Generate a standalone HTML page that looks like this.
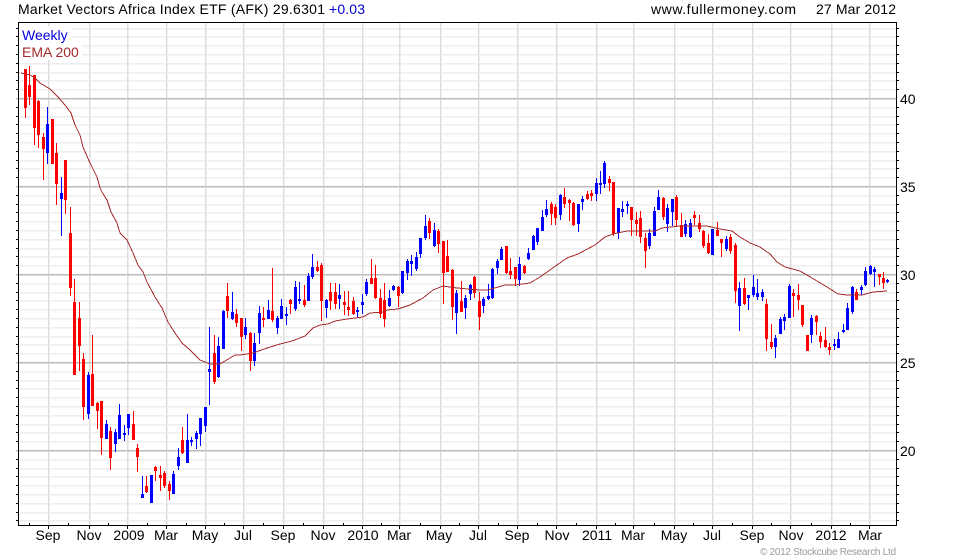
<!DOCTYPE html>
<html><head><meta charset="utf-8"><title>AFK chart</title>
<style>html,body{margin:0;padding:0;background:#fff;width:980px;height:560px;overflow:hidden}svg{display:block}text{font-family:"Liberation Sans",Arial,sans-serif}</style></head>
<body>
<svg xmlns="http://www.w3.org/2000/svg" width="980" height="560" viewBox="0 0 980 560">
<rect width="980" height="560" fill="#fff"/>
<g shape-rendering="crispEdges" clip-path="url(#plot)">
<clipPath id="plot"><rect x="16" y="23" width="880" height="502"/></clipPath>
<defs>
<path id="hm" fill="none" d="M19 28.5H896M19 36.5H896M19 45.5H896M19 54.5H896M19 63.5H896M19 72.5H896M19 80.5H896M19 89.5H896M19 107.5H896M19 116.5H896M19 124.5H896M19 133.5H896M19 142.5H896M19 151.5H896M19 160.5H896M19 168.5H896M19 177.5H896M19 195.5H896M19 204.5H896M19 212.5H896M19 221.5H896M19 230.5H896M19 239.5H896M19 248.5H896M19 256.5H896M19 265.5H896M19 283.5H896M19 292.5H896M19 300.5H896M19 309.5H896M19 318.5H896M19 327.5H896M19 336.5H896M19 344.5H896M19 353.5H896M19 371.5H896M19 380.5H896M19 388.5H896M19 397.5H896M19 406.5H896M19 415.5H896M19 424.5H896M19 432.5H896M19 441.5H896M19 459.5H896M19 468.5H896M19 476.5H896M19 485.5H896M19 494.5H896M19 503.5H896M19 512.5H896M19 520.5H896"/>
<path id="vg" fill="none" d="M48.5 23V525M89.5 23V525M127.5 23V525M166.5 23V525M205.5 23V525M243.5 23V525M283.5 23V525M323.5 23V525M362.5 23V525M399.5 23V525M440.5 23V525M478.5 23V525M517.5 23V525M556.5 23V525M596.5 23V525M633.5 23V525M674.5 23V525M712.5 23V525M752.5 23V525M790.5 23V525M831.5 23V525M869.5 23V525"/>
<path id="hj" fill="none" d="M16 98.5H896M16 186.5H896M16 274.5H896M16 362.5H896M16 450.5H896"/>
</defs>
<use href="#hm" stroke="#f6f6f6" transform="translate(0,1)"/>
<use href="#hm" stroke="#eee"/>
<use href="#vg" stroke="#eee" transform="translate(1,0)"/>
<use href="#vg" stroke="#ddd"/>
<use href="#hj" stroke="#ddd" transform="translate(0,1)"/>
<use href="#hj" stroke="#bbb"/>
<rect x="19" y="26" width="52" height="18" fill="#fff"/>
<rect x="19" y="44" width="63" height="16" fill="#fff"/>
</g>
<g shape-rendering="crispEdges">
<path fill="#f00" d="M25 69h1V118h-1zM24 69h3V108h-3zM29 66h1V105h-1zM28 85h3V97h-3zM34 75h1V145h-1zM33 75h3V128h-3zM38 100h1V148h-1zM37 101h3V135h-3zM43 133h1V180h-1zM42 137h3V149h-3zM51 119h3V164h-3zM56 143h1V205h-1zM55 153h3V184h-3zM65 160h1V214h-1zM64 160h3V200h-3zM70 207h1V296h-1zM69 233h3V288h-3zM74 279h1V375h-1zM73 302h3V375h-3zM79 302h1V371h-1zM78 318h3V346h-3zM83 353h1V420h-1zM82 359h3V407h-3zM92 335h1V406h-1zM91 374h3V406h-3zM97 402h1V429h-1zM96 403h3V411h-3zM101 401h1V455h-1zM100 401h3V438h-3zM110 427h1V470h-1zM109 431h3V458h-3zM133 411h1V440h-1zM132 424h3V440h-3zM137 444h1V472h-1zM136 448h3V457h-3zM146 476h1V493h-1zM145 486h3V492h-3zM155 466h1V481h-1zM154 467h3V471h-3zM160 466h1V491h-1zM159 475h3V478h-3zM164 471h1V488h-1zM163 473h3V486h-3zM169 481h1V500h-1zM168 484h3V491h-3zM182 427h1V454h-1zM181 440h3V453h-3zM214 335h1V384h-1zM213 353h3V382h-3zM227 283h1V318h-1zM226 296h3V311h-3zM236 309h1V327h-1zM235 314h3V323h-3zM241 318h1V351h-1zM240 318h3V337h-3zM250 332h1V371h-1zM249 333h3V361h-3zM263 307h1V327h-1zM262 318h3V320h-3zM272 268h1V322h-1zM271 311h3V320h-3zM290 299h1V314h-1zM289 300h3V304h-3zM304 285h1V307h-1zM303 300h3V305h-3zM317 261h1V272h-1zM316 267h3V271h-3zM321 263h1V321h-1zM320 265h3V301h-3zM330 283h1V310h-1zM329 292h3V301h-3zM335 283h1V309h-1zM334 292h3V304h-3zM344 291h1V315h-1zM343 302h3V305h-3zM348 291h1V316h-1zM347 307h3V310h-3zM353 297h1V315h-1zM352 301h3V314h-3zM371 259h1V284h-1zM370 278h3V284h-3zM375 265h1V299h-1zM374 278h3V298h-3zM380 289h1V318h-1zM379 298h3V314h-3zM384 283h1V327h-1zM383 300h3V319h-3zM398 286h1V307h-1zM397 287h3V296h-3zM429 218h1V239h-1zM428 221h3V233h-3zM438 229h1V253h-1zM437 231h3V244h-3zM443 241h1V304h-1zM442 241h3V273h-3zM447 240h1V272h-1zM446 256h3V272h-3zM452 269h1V320h-1zM451 270h3V307h-3zM461 281h1V312h-1zM460 301h3V312h-3zM474 276h1V298h-1zM473 277h3V293h-3zM479 292h1V330h-1zM478 301h3V317h-3zM506 246h1V274h-1zM505 246h3V273h-3zM510 258h1V279h-1zM509 271h3V275h-3zM515 267h1V286h-1zM514 267h3V279h-3zM524 265h1V274h-1zM523 266h3V273h-3zM551 202h1V225h-1zM550 204h3V214h-3zM555 204h1V225h-1zM554 207h3V218h-3zM564 188h1V208h-1zM563 197h3V204h-3zM569 199h1V221h-1zM568 200h3V203h-3zM573 202h1V226h-1zM572 203h3V225h-3zM587 191h1V200h-1zM586 194h3V199h-3zM591 190h1V201h-1zM590 193h3V196h-3zM609 176h1V191h-1zM608 179h3V183h-3zM613 182h1V236h-1zM612 182h3V234h-3zM631 207h1V236h-1zM630 207h3V220h-3zM636 212h1V236h-1zM635 220h3V224h-3zM640 211h1V243h-1zM639 218h3V237h-3zM645 233h1V268h-1zM644 238h3V251h-3zM663 197h1V220h-1zM662 198h3V217h-3zM676 195h1V226h-1zM675 197h3V220h-3zM681 213h1V237h-1zM680 225h3V237h-3zM694 211h1V225h-1zM693 215h3V218h-3zM699 215h1V232h-1zM698 223h3V229h-3zM703 230h1V248h-1zM702 231h3V246h-3zM708 234h1V254h-1zM707 243h3V253h-3zM717 222h1V236h-1zM716 230h3V236h-3zM721 239h1V257h-1zM720 239h3V243h-3zM730 234h1V254h-1zM729 237h3V251h-3zM735 243h1V303h-1zM734 245h3V291h-3zM744 278h1V305h-1zM743 288h3V304h-3zM766 299h1V351h-1zM765 304h3V339h-3zM771 324h1V349h-1zM770 342h3V347h-3zM793 289h1V317h-1zM792 293h3V296h-3zM798 284h1V310h-1zM797 295h3V300h-3zM802 305h1V327h-1zM801 305h3V325h-3zM806 335h3V351h-3zM816 315h1V335h-1zM815 316h3V322h-3zM820 332h1V348h-1zM819 336h3V342h-3zM825 327h1V348h-1zM824 340h3V347h-3zM829 343h1V355h-1zM828 347h3V350h-3zM856 289h1V300h-1zM855 292h3V300h-3zM879 274h1V285h-1zM878 274h3V277h-3zM883 272h1V289h-1zM882 278h3V283h-3z"/>
<path fill="#00f" d="M47 107h1V164h-1zM46 124h3V153h-3zM61 177h1V236h-1zM60 193h3V199h-3zM88 372h1V419h-1zM87 375h3V414h-3zM106 420h1V439h-1zM105 424h3V439h-3zM115 429h1V452h-1zM114 432h3V444h-3zM119 404h1V439h-1zM118 415h3V439h-3zM124 425h1V441h-1zM123 433h3V435h-3zM128 414h1V435h-1zM127 414h3V428h-3zM142 476h1V498h-1zM141 494h3V498h-3zM150 475h3V503h-3zM173 471h1V494h-1zM172 474h3V494h-3zM178 448h1V470h-1zM177 457h3V466h-3zM187 414h1V463h-1zM186 440h3V463h-3zM191 437h1V446h-1zM190 440h3V442h-3zM196 431h1V449h-1zM195 433h3V439h-3zM200 418h1V446h-1zM199 418h3V434h-3zM205 407h1V432h-1zM204 407h3V426h-3zM209 327h1V405h-1zM208 369h3V372h-3zM218 337h1V378h-1zM217 346h3V377h-3zM223 310h1V349h-1zM222 311h3V349h-3zM232 292h1V320h-1zM231 312h3V319h-3zM245 318h1V339h-1zM244 327h3V335h-3zM254 333h1V366h-1zM253 343h3V361h-3zM259 306h1V344h-1zM258 313h3V333h-3zM268 300h1V319h-1zM267 310h3V319h-3zM277 316h1V334h-1zM276 318h3V328h-3zM281 299h1V319h-1zM280 306h3V319h-3zM286 307h1V325h-1zM285 314h3V316h-3zM295 281h1V311h-1zM294 287h3V309h-3zM299 282h1V304h-1zM298 299h3V301h-3zM308 273h1V301h-1zM307 276h3V301h-3zM312 254h1V279h-1zM311 267h3V277h-3zM326 299h1V318h-1zM325 300h3V308h-3zM339 284h1V309h-1zM338 295h3V299h-3zM357 307h1V317h-1zM356 310h3V312h-3zM362 294h1V314h-1zM361 302h3V305h-3zM366 279h1V296h-1zM365 282h3V294h-3zM389 290h1V307h-1zM388 298h3V306h-3zM393 285h1V291h-1zM392 286h3V290h-3zM402 271h1V294h-1zM401 271h3V293h-3zM407 259h1V280h-1zM406 261h3V273h-3zM411 255h1V276h-1zM410 261h3V264h-3zM416 252h1V271h-1zM415 257h3V269h-3zM420 238h1V258h-1zM419 238h3V254h-3zM425 215h1V240h-1zM424 226h3V238h-3zM434 223h1V247h-1zM433 230h3V246h-3zM456 290h1V334h-1zM455 293h3V313h-3zM465 295h1V319h-1zM464 298h3V308h-3zM470 284h1V300h-1zM469 285h3V294h-3zM483 297h1V313h-1zM482 299h3V306h-3zM488 284h1V300h-1zM487 296h3V299h-3zM492 268h1V299h-1zM491 269h3V298h-3zM497 259h1V274h-1zM496 261h3V268h-3zM501 247h1V260h-1zM500 249h3V260h-3zM519 257h1V286h-1zM518 264h3V280h-3zM528 248h1V260h-1zM527 253h3V259h-3zM533 235h1V250h-1zM532 236h3V250h-3zM537 228h1V245h-1zM536 228h3V242h-3zM542 210h1V231h-1zM541 217h3V231h-3zM546 200h1V217h-1zM545 209h3V215h-3zM560 194h1V220h-1zM559 195h3V215h-3zM578 204h1V232h-1zM577 204h3V224h-3zM582 196h1V210h-1zM581 199h3V202h-3zM596 178h1V201h-1zM595 183h3V194h-3zM600 171h1V194h-1zM599 183h3V185h-3zM604 161h1V188h-1zM603 163h3V184h-3zM618 208h1V239h-1zM617 208h3V233h-3zM622 201h1V217h-1zM621 209h3V212h-3zM627 201h1V214h-1zM626 204h3V206h-3zM649 229h1V249h-1zM648 233h3V246h-3zM654 207h1V236h-1zM653 211h3V236h-3zM658 190h1V210h-1zM657 197h3V210h-3zM667 204h1V232h-1zM666 208h3V224h-3zM672 199h1V226h-1zM671 199h3V212h-3zM685 220h1V237h-1zM684 224h3V234h-3zM690 219h1V238h-1zM689 223h3V237h-3zM712 229h1V255h-1zM711 229h3V255h-3zM726 236h1V251h-1zM725 239h3V249h-3zM739 282h1V331h-1zM738 288h3V306h-3zM748 295h1V310h-1zM747 295h3V298h-3zM753 275h1V297h-1zM752 287h3V295h-3zM757 279h1V300h-1zM756 293h3V297h-3zM762 289h1V301h-1zM761 292h3V297h-3zM775 335h1V358h-1zM774 338h3V347h-3zM780 317h1V334h-1zM779 319h3V334h-3zM784 314h1V330h-1zM783 317h3V321h-3zM789 284h1V318h-1zM788 286h3V318h-3zM811 315h1V343h-1zM810 318h3V335h-3zM834 339h1V350h-1zM833 344h3V346h-3zM838 332h1V348h-1zM837 339h3V348h-3zM843 324h1V333h-1zM842 330h3V332h-3zM847 303h1V330h-1zM846 308h3V330h-3zM852 286h1V314h-1zM851 287h3V312h-3zM861 285h1V295h-1zM860 287h3V290h-3zM865 267h1V286h-1zM864 271h3V285h-3zM870 265h1V275h-1zM869 266h3V274h-3zM874 267h1V287h-1zM873 269h3V272h-3zM887 279h1V283h-1zM886 280h3V282h-3z"/>
<polyline fill="none" stroke="#a52a2a" points="21,73 30,75 35,78 40,83 50,89 58,97 65,105 71,113 75,125 80,135 83,147 90,163 97,177 100,188 102,192 107,200 111,212 117,223 120,233 127,240 133,253 138,265 143,272 147,282 155,297 162,308 168,322 175,333 182,343 190,350 200,360 210,364 220,364 230,358 235,355 240,355 253,353 267,348 280,344 292,341 305,336 313,328 320,325 328,324 335,321 347,319 363,317 370,313 383,312 387,310 398,309 410,305 423,298 433,290 443,286 457,288 480,290 488,290 505,285 515,285 530,283 540,277 557,265 567,258 578,254 595,245 605,237 613,234 627,231 643,231 655,231 662,228 680,226 707,226 720,229 732,231 740,237 750,243 760,247 770,254 777,262 785,267 800,271 812,278 827,287 838,294 847,295 862,295 873,292 887,291"/>
<path fill="none" stroke="#000" d="M16 28.5H18M16 36.5H18M16 45.5H18M16 54.5H18M16 63.5H18M16 72.5H18M16 80.5H18M16 89.5H18M16 107.5H18M16 116.5H18M16 124.5H18M16 133.5H18M16 142.5H18M16 151.5H18M16 160.5H18M16 168.5H18M16 177.5H18M16 195.5H18M16 204.5H18M16 212.5H18M16 221.5H18M16 230.5H18M16 239.5H18M16 248.5H18M16 256.5H18M16 265.5H18M16 283.5H18M16 292.5H18M16 300.5H18M16 309.5H18M16 318.5H18M16 327.5H18M16 336.5H18M16 344.5H18M16 353.5H18M16 371.5H18M16 380.5H18M16 388.5H18M16 397.5H18M16 406.5H18M16 415.5H18M16 424.5H18M16 432.5H18M16 441.5H18M16 459.5H18M16 468.5H18M16 476.5H18M16 485.5H18M16 494.5H18M16 503.5H18M16 512.5H18M16 520.5H18M897 28.5H899M897 36.5H899M897 45.5H899M897 54.5H899M897 63.5H899M897 72.5H899M897 80.5H899M897 89.5H899M897 107.5H899M897 116.5H899M897 124.5H899M897 133.5H899M897 142.5H899M897 151.5H899M897 160.5H899M897 168.5H899M897 177.5H899M897 195.5H899M897 204.5H899M897 212.5H899M897 221.5H899M897 230.5H899M897 239.5H899M897 248.5H899M897 256.5H899M897 265.5H899M897 283.5H899M897 292.5H899M897 300.5H899M897 309.5H899M897 318.5H899M897 327.5H899M897 336.5H899M897 344.5H899M897 353.5H899M897 371.5H899M897 380.5H899M897 388.5H899M897 397.5H899M897 406.5H899M897 415.5H899M897 424.5H899M897 432.5H899M897 441.5H899M897 459.5H899M897 468.5H899M897 476.5H899M897 485.5H899M897 494.5H899M897 503.5H899M897 512.5H899M897 520.5H899M48.5 526V529M89.5 526V529M127.5 526V529M166.5 526V529M205.5 526V529M243.5 526V529M283.5 526V529M323.5 526V529M362.5 526V529M399.5 526V529M440.5 526V529M478.5 526V529M517.5 526V529M556.5 526V529M596.5 526V529M633.5 526V529M674.5 526V529M712.5 526V529M752.5 526V529M790.5 526V529M831.5 526V529M869.5 526V529M29.5 523V525M68.5 523V525M108.5 523V525M147.5 523V525M186.5 523V525M224.5 523V525M263.5 523V525M303.5 523V525M343.5 523V525M381.5 523V525M420.5 523V525M459.5 523V525M498.5 523V525M537.5 523V525M576.5 523V525M615.5 523V525M654.5 523V525M693.5 523V525M732.5 523V525M771.5 523V525M811.5 523V525M850.5 523V525"/>
<rect x="18.5" y="22.5" width="878" height="503" fill="none" stroke="#000"/>
</g>
<text x="18" y="14" font-size="14" textLength="307">Market Vectors Africa Index ETF (AFK) 29.6301</text>
<text x="329" y="14" font-size="14" fill="#0000d0" textLength="36">+0.03</text>
<text x="651" y="14" font-size="14" textLength="145">www.fullermoney.com</text>
<text x="816" y="14" font-size="14" textLength="80">27 Mar 2012</text>
<text x="22" y="40" font-size="14" fill="#0000e0">Weekly</text>
<text x="22" y="57" font-size="14" fill="#a52a2a">EMA 200</text>
<g font-size="14">
<text x="900" y="104">40</text><text x="900" y="192">35</text><text x="900" y="280">30</text><text x="900" y="368">25</text><text x="900" y="456">20</text>
</g>
<g font-size="14" text-anchor="middle">
<text x="48" y="540">Sep</text><text x="89" y="540">Nov</text><text x="129" y="540">2009</text><text x="166" y="540">Mar</text><text x="205" y="540">May</text><text x="243" y="540">Jul</text><text x="283" y="540">Sep</text><text x="323" y="540">Nov</text><text x="363" y="540">2010</text><text x="399" y="540">Mar</text><text x="439" y="540">May</text><text x="478" y="540">Jul</text><text x="517" y="540">Sep</text><text x="557" y="540">Nov</text><text x="597" y="540">2011</text><text x="633" y="540">Mar</text><text x="674" y="540">May</text><text x="712" y="540">Jul</text><text x="752" y="540">Sep</text><text x="791" y="540">Nov</text><text x="831" y="540">2012</text><text x="870" y="540">Mar</text>
</g>
<text x="760" y="555" font-size="10" fill="#999" textLength="136">© 2012 Stockcube Research Ltd</text>
</svg>
</body></html>
